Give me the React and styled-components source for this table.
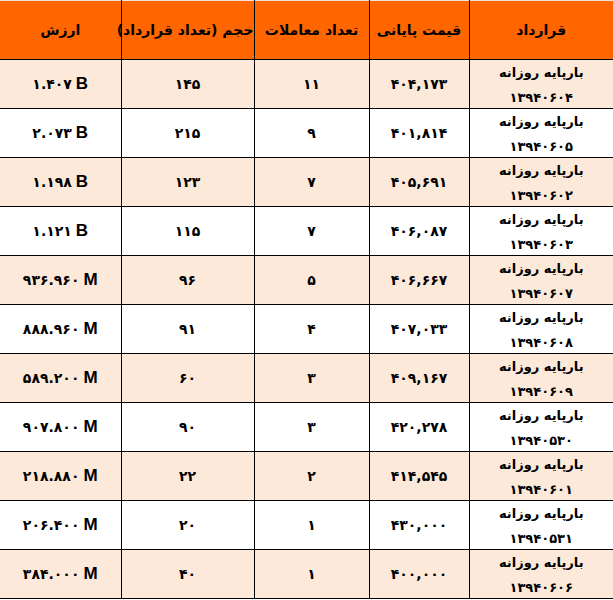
import React from "react";
import styled, { createGlobalStyle } from "styled-components";

const GlobalStyle = createGlobalStyle`
  body {
    margin: 0;
    background: #fff;
    font-family: "DejaVu Sans", "Noto Sans", sans-serif;
  }
`;

const Table = styled.table`
  width: 613px;
  border-collapse: collapse;
  direction: rtl;
  table-layout: fixed;
  border-top: 1px solid #f3e3d8;
`;

const HeadCell = styled.th`
  height: 58px;
  background-color: #ff6600;
  color: #000;
  font-size: 14px;
  font-weight: bold;
  text-align: center;
  white-space: nowrap;
  padding: 0;
  border-left: 1px solid #000;
  &:last-child {
    border-left: none;
  }
`;

const Row = styled.tr`
  background-color: ${(props) => (props.$shade ? "#fde9d9" : "#ffffff")};
`;

const Cell = styled.td`
  height: 48px;
  padding: 0;
  font-size: 14px;
  font-weight: bold;
  text-align: center;
  vertical-align: middle;
  border-left: 1px solid #000;
  border-top: 1px solid #000;
  border-bottom: 1px solid #000;
  &:last-child {
    border-left: none;
  }
`;

const ContractCell = styled(Cell)`
  vertical-align: top;
`;

const ContractText = styled.div`
  height: 48px;
  overflow: hidden;
  line-height: 25px;
  box-sizing: border-box;
  font-size: 13px;
`;

const Value = styled.span`
  direction: ltr;
  unicode-bidi: isolate;
  display: inline-flex;
  align-items: baseline;
  gap: 4px;
`;

const Unit = styled.b`
  font-family: "Liberation Sans", Arial, sans-serif;
  font-size: 17px;
`;

const rows = [
  ["۱۳۹۴۰۶۰۴", "۴۰۴,۱۷۳", "۱۱", "۱۴۵", "۱.۴۰۷", "B"],
  ["۱۳۹۴۰۶۰۵", "۴۰۱,۸۱۴", "۹", "۲۱۵", "۲.۰۷۳", "B"],
  ["۱۳۹۴۰۶۰۲", "۴۰۵,۶۹۱", "۷", "۱۲۳", "۱.۱۹۸", "B"],
  ["۱۳۹۴۰۶۰۳", "۴۰۶,۰۸۷", "۷", "۱۱۵", "۱.۱۲۱", "B"],
  ["۱۳۹۴۰۶۰۷", "۴۰۶,۶۶۷", "۵", "۹۶", "۹۳۶.۹۶۰", "M"],
  ["۱۳۹۴۰۶۰۸", "۴۰۷,۰۳۳", "۴", "۹۱", "۸۸۸.۹۶۰", "M"],
  ["۱۳۹۴۰۶۰۹", "۴۰۹,۱۶۷", "۳", "۶۰", "۵۸۹.۲۰۰", "M"],
  ["۱۳۹۴۰۵۳۰", "۴۲۰,۲۷۸", "۳", "۹۰", "۹۰۷.۸۰۰", "M"],
  ["۱۳۹۴۰۶۰۱", "۴۱۴,۵۴۵", "۲", "۲۲", "۲۱۸.۸۸۰", "M"],
  ["۱۳۹۴۰۵۳۱", "۴۳۰,۰۰۰", "۱", "۲۰", "۲۰۶.۴۰۰", "M"],
  ["۱۳۹۴۰۶۰۶", "۴۰۰,۰۰۰", "۱", "۴۰", "۳۸۴.۰۰۰", "M"],
];

function App() {
  return (
    <>
      <GlobalStyle />
      <Table>
        <colgroup>
          <col style={{ width: 144 }} />
          <col style={{ width: 100 }} />
          <col style={{ width: 115 }} />
          <col style={{ width: 133 }} />
          <col style={{ width: 121 }} />
        </colgroup>
        <thead>
          <tr>
            <HeadCell>قرارداد</HeadCell>
            <HeadCell>قیمت پایانی</HeadCell>
            <HeadCell>تعداد معاملات</HeadCell>
            <HeadCell>حجم (تعداد قرارداد)</HeadCell>
            <HeadCell>ارزش</HeadCell>
          </tr>
        </thead>
        <tbody>
          {rows.map(([date, price, count, volume, value, unit], i) => (
            <Row key={date} $shade={i % 2 === 0}>
              <ContractCell>
                <ContractText>
                  بارپایه روزانه
                  <br />
                  {date}
                </ContractText>
              </ContractCell>
              <Cell>{price}</Cell>
              <Cell>{count}</Cell>
              <Cell>{volume}</Cell>
              <Cell>
                <Value>
                  {value} <Unit>{unit}</Unit>
                </Value>
              </Cell>
            </Row>
          ))}
        </tbody>
      </Table>
    </>
  );
}

export default App;
